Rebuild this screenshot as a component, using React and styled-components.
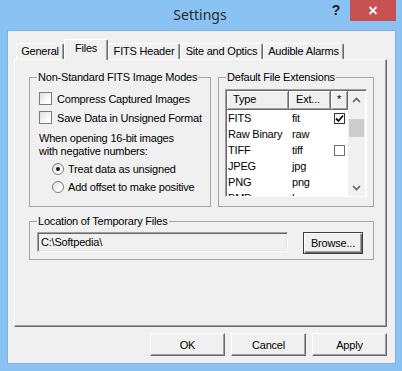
import React from 'react'
import styled, { createGlobalStyle } from 'styled-components'

const GlobalStyle = createGlobalStyle`
    body {
        margin: 0;
        font-family: "Liberation Sans", Arial, sans-serif;
        font-size: 11px;
        letter-spacing: -0.2px;
        color: #000;
    }
`

const Window = styled.div`
    width: 402px;
    height: 371px;
    display: flex;
    flex-direction: column;
    background: #8ac2f3;
    box-sizing: border-box;
`

const TitleBar = styled.div`
    height: 31px;
    display: grid;
    grid-template-columns: 1fr auto 1fr;
    padding: 0 6px 0 4px;
    flex-shrink: 0;
`

const Title = styled.div`
    grid-column: 2;
    font-family: "Noto Sans", "Open Sans", sans-serif;
    font-size: 14px;
    letter-spacing: 0;
    line-height: 30px;
    color: #2b2b2b;
`

const Controls = styled.div`
    grid-column: 3;
    display: flex;
    justify-content: flex-end;
    align-items: flex-start;
`

const HelpButton = styled.div`
    width: 28px;
    height: 21px;
    line-height: 21px;
    text-align: center;
    font-family: "Liberation Sans", Arial, sans-serif;
    font-weight: bold;
    font-size: 14px;
    color: #1e1e1e;
`

const CloseButton = styled.div`
    width: 46px;
    height: 21px;
    background: #c75050;
    display: flex;
    align-items: center;
    justify-content: center;
`

const Client = styled.div`
    flex: 1;
    margin: 0 7px 8px 8px;
    background: #f0f0f0;
    display: flex;
    flex-direction: column;
    padding: 8px 8px 7px 6px;
    box-shadow: 0 0 0 1px #7fb2e3;
`

const TabStrip = styled.div`
    height: 20px;
    display: flex;
    align-items: flex-end;
    padding-left: 2px;
    flex-shrink: 0;
`

const Tab = styled.div`
    position: relative;
    box-sizing: border-box;
    width: ${p => p.$w}px;
    height: ${p => (p.$active ? 21 : 16)}px;
    margin-bottom: ${p => (p.$active ? -1 : 0)}px;
    z-index: ${p => (p.$active ? 2 : 1)};
    background: #f0f0f0;
    border-top: 1px solid #fff;
    border-left: 1px solid #fff;
    border-right: 1px solid #696969;
    box-shadow: inset -1px 0 #a0a0a0;
    border-radius: 2px 2px 0 0;
    display: flex;
    align-items: center;
    justify-content: center;
    padding-bottom: ${p => (p.$active ? 3 : 0)}px;
    line-height: 13px;
`

const Panel = styled.div`
    flex: 1;
    box-sizing: border-box;
    border-top: 1px solid #fff;
    border-left: 1px solid #fff;
    border-right: 1px solid #696969;
    border-bottom: 1px solid #696969;
    box-shadow: inset -1px -1px #a0a0a0;
    padding: 11px 12px 0 14px;
    display: flex;
    flex-direction: column;
`

const GroupsRow = styled.div`
    display: flex;
    gap: 7px;
`

const Group = styled.fieldset`
    margin: ${p => p.$top || 0}px 0 0 0;
    padding: 0;
    min-width: 0;
    box-sizing: border-box;
    width: ${p => p.$w}px;
    height: ${p => p.$h}px;
    border: 1px solid #a5a5a5;
`

const Caption = styled.legend`
    margin-left: 7px;
    padding: 0 1px;
    line-height: 13px;
    font-size: 11px;
`

const GroupBody = styled.div`
    padding: ${p => p.$pad};
    display: flex;
    flex-direction: ${p => (p.$row ? 'row' : 'column')};
    align-items: flex-start;
`

const OptionRow = styled.div`
    display: flex;
    align-items: center;
    height: 13px;
    margin-top: ${p => p.$mt}px;
    padding-left: ${p => p.$indent || 0}px;
`

const CheckBox = styled.span`
    width: 13px;
    height: 13px;
    box-sizing: border-box;
    border: 1px solid #7a7a7a;
    background: linear-gradient(135deg, #dedede, #fdfdfd 70%);
    margin-right: 5px;
    flex-shrink: 0;
`

const RadioDot = styled.span`
    width: 12px;
    height: 12px;
    box-sizing: border-box;
    border-radius: 50%;
    border: 1px solid #7a7a7a;
    background: linear-gradient(135deg, #dedede, #fdfdfd 70%);
    margin-right: 4px;
    display: flex;
    align-items: center;
    justify-content: center;
    flex-shrink: 0;
    &::after {
        content: '';
        width: 4px;
        height: 4px;
        border-radius: 50%;
        background: #1a1a1a;
        display: ${p => (p.$on ? 'block' : 'none')};
    }
`

const Note = styled.div`
    margin-top: 8px;
    line-height: 13px;
`

const ListBox = styled.div`
    width: 142px;
    height: 108px;
    box-sizing: border-box;
    border-top: 1px solid #a0a0a0;
    border-left: 1px solid #a0a0a0;
    border-right: 1px solid #fff;
    border-bottom: 1px solid #fff;
    box-shadow: inset 1px 1px #696969;
    padding: 1px 0 0 1px;
    display: flex;
    background: #fff;
`

const ListArea = styled.div`
    width: 121px;
    overflow: hidden;
    display: flex;
    flex-direction: column;
`

const HeaderRow = styled.div`
    display: grid;
    grid-template-columns: 62px 42px 17px;
    height: 19px;
    flex-shrink: 0;
`

const HeaderCell = styled.div`
    box-sizing: border-box;
    background: #f0f0f0;
    border-right: 1px solid #696969;
    border-bottom: 1px solid #696969;
    box-shadow: inset 1px 1px #fff, inset -1px -1px #a0a0a0;
    line-height: 17px;
    padding-left: ${p => p.$pad}px;
    text-align: ${p => p.$align || 'left'};
`

const Row = styled.div`
    display: grid;
    grid-template-columns: 62px 42px 17px;
    height: 16px;
    align-items: center;
    flex-shrink: 0;
`

const Cell = styled.div`
    padding-left: ${p => p.$pad}px;
    white-space: nowrap;
    display: flex;
    justify-content: ${p => (p.$center ? 'center' : 'flex-start')};
`

const MiniCheck = styled.span`
    width: 11px;
    height: 11px;
    box-sizing: border-box;
    border: 1px solid ${p => (p.$on ? '#333' : '#6d6d6d')};
    background: #fff;
    display: flex;
    align-items: center;
    justify-content: center;
`

const ScrollBar = styled.div`
    width: 17px;
    background: #f0f0f0;
    display: flex;
    flex-direction: column;
`

const ScrollButton = styled.div`
    height: 17px;
    display: flex;
    align-items: center;
    justify-content: center;
`

const ScrollTrack = styled.div`
    flex: 1;
    padding-top: 11px;
`

const ScrollThumb = styled.div`
    height: 18px;
    margin: 0 1px;
    background: #cdcdcd;
`

const PathField = styled.div`
    width: 251px;
    height: 20px;
    box-sizing: border-box;
    border-top: 1px solid #a0a0a0;
    border-left: 1px solid #a0a0a0;
    border-right: 1px solid #fff;
    border-bottom: 1px solid #fff;
    box-shadow: inset 1px 1px #696969, inset -1px -1px #e3e3e3;
    background: #f0f0f0;
    padding-left: 3px;
    line-height: 18px;
`

const BrowseButton = styled.div`
    width: 60px;
    height: 22px;
    margin-left: 15px;
    box-sizing: border-box;
    border: 1px solid #3f3f3f;
    box-shadow: inset 1px 1px #fff, inset -1px -1px #696969, inset -2px -2px #a0a0a0;
    display: flex;
    align-items: center;
    justify-content: center;
`

const ButtonRow = styled.div`
    display: flex;
    justify-content: flex-end;
    gap: 6px;
    margin-top: 6px;
    flex-shrink: 0;
`

const DialogButton = styled.div`
    width: 75px;
    height: 23px;
    box-sizing: border-box;
    border-top: 1px solid #fff;
    border-left: 1px solid #fff;
    border-right: 1px solid #696969;
    border-bottom: 1px solid #696969;
    box-shadow: inset -1px -1px #a0a0a0;
    display: flex;
    align-items: center;
    justify-content: center;
`

const tabs = [
    { label: 'General', w: 48 },
    { label: 'Files', w: 44, active: true },
    { label: 'FITS Header', w: 72 },
    { label: 'Site and Optics', w: 83 },
    { label: 'Audible Alarms', w: 81 },
]

const extensions = [
    { type: 'FITS', ext: 'fit', check: true },
    { type: 'Raw Binary', ext: 'raw' },
    { type: 'TIFF', ext: 'tiff', check: false },
    { type: 'JPEG', ext: 'jpg' },
    { type: 'PNG', ext: 'png' },
    { type: 'BMP', ext: 'bmp' },
]

const Chevron = ({ down }) => (
    <svg width="9" height="6" viewBox="0 0 9 6">
        <polyline
            points={down ? '1,1 4.5,4.5 8,1' : '1,5 4.5,1.5 8,5'}
            fill="none"
            stroke="#606060"
            strokeWidth="1.6"
        />
    </svg>
)

const Tick = () => (
    <svg width="9" height="9" viewBox="0 0 9 9">
        <polyline points="1,4.5 3.5,7 8,1.5" fill="none" stroke="#111" strokeWidth="1.8" />
    </svg>
)

function App() {
    return (
        <Window>
            <GlobalStyle />
            <TitleBar>
                <Title>Settings</Title>
                <Controls>
                    <HelpButton>?</HelpButton>
                    <CloseButton>
                        <svg width="10" height="9" viewBox="0 0 10 9">
                            <path d="M1.5 1 L8.5 8 M8.5 1 L1.5 8" stroke="#fff" strokeWidth="1.8" />
                        </svg>
                    </CloseButton>
                </Controls>
            </TitleBar>
            <Client>
                <TabStrip>
                    {tabs.map(t => (
                        <Tab key={t.label} $w={t.w} $active={t.active}>{t.label}</Tab>
                    ))}
                </TabStrip>
                <Panel>
                    <GroupsRow>
                        <Group $w={182} $h={136}>
                            <Caption>Non-Standard FITS Image Modes</Caption>
                            <GroupBody $pad="0 0 0 9px">
                                <OptionRow $mt={8}><CheckBox />Compress Captured Images</OptionRow>
                                <OptionRow $mt={6}><CheckBox />Save Data in Unsigned Format</OptionRow>
                                <Note>When opening 16-bit images<br />with negative numbers:</Note>
                                <OptionRow $mt={4} $indent={13}><RadioDot $on />Treat data as unsigned</OptionRow>
                                <OptionRow $mt={5} $indent={13}><RadioDot />Add offset to make positive</OptionRow>
                            </GroupBody>
                        </Group>
                        <Group $w={156} $h={136}>
                            <Caption>Default File Extensions</Caption>
                            <GroupBody $pad="5px 0 0 6px">
                                <ListBox>
                                    <ListArea>
                                        <HeaderRow>
                                            <HeaderCell $pad={6}>Type</HeaderCell>
                                            <HeaderCell $pad={7}>Ext...</HeaderCell>
                                            <HeaderCell $pad={0} $align="center">*</HeaderCell>
                                        </HeaderRow>
                                        {extensions.map(e => (
                                            <Row key={e.type}>
                                                <Cell $pad={1}>{e.type}</Cell>
                                                <Cell $pad={3}>{e.ext}</Cell>
                                                <Cell $pad={0} $center>
                                                    {e.check !== undefined && (
                                                        <MiniCheck $on={e.check}>{e.check && <Tick />}</MiniCheck>
                                                    )}
                                                </Cell>
                                            </Row>
                                        ))}
                                    </ListArea>
                                    <ScrollBar>
                                        <ScrollButton><Chevron /></ScrollButton>
                                        <ScrollTrack><ScrollThumb /></ScrollTrack>
                                        <ScrollButton><Chevron down /></ScrollButton>
                                    </ScrollBar>
                                </ListBox>
                            </GroupBody>
                        </Group>
                    </GroupsRow>
                    <Group $w={345} $h={45} $top={8}>
                        <Caption>Location of Temporary Files</Caption>
                        <GroupBody $pad="4px 0 0 7px" $row>
                            <PathField>C:\Softpedia\</PathField>
                            <BrowseButton>Browse...</BrowseButton>
                        </GroupBody>
                    </Group>
                </Panel>
                <ButtonRow>
                    <DialogButton>OK</DialogButton>
                    <DialogButton>Cancel</DialogButton>
                    <DialogButton>Apply</DialogButton>
                </ButtonRow>
            </Client>
        </Window>
    )
}

export default App
